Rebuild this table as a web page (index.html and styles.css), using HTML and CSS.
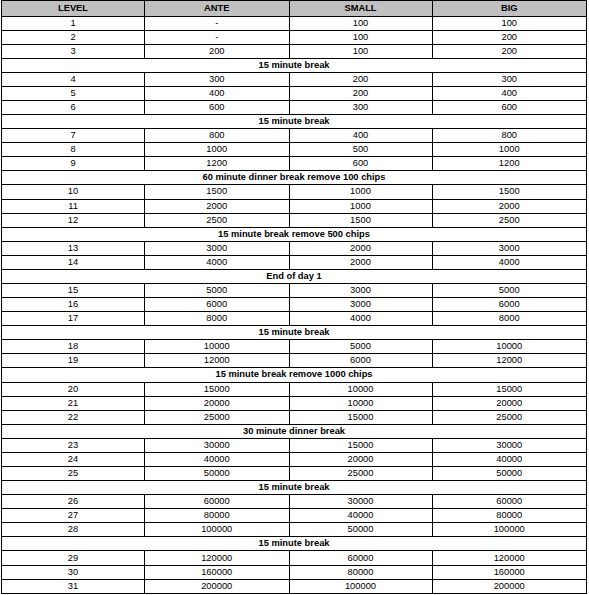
FILE: index.html
```html
<!DOCTYPE html>
<html>
<head>
<meta charset="utf-8">
<link rel="stylesheet" href="styles.css">
</head>
<body>
<table class="blinds">
<colgroup><col class="c1"><col class="c2"><col class="c3"><col class="c4"></colgroup>
<thead>
<tr class="head"><th>LEVEL</th><th>ANTE</th><th>SMALL</th><th>BIG</th></tr>
</thead>
<tbody>
<tr><td>1</td><td>-</td><td>100</td><td>100</td></tr>
<tr><td>2</td><td>-</td><td>100</td><td>200</td></tr>
<tr><td>3</td><td>200</td><td>100</td><td>200</td></tr>
<tr class="brk"><td colspan="4">15 minute break</td></tr>
<tr><td>4</td><td>300</td><td>200</td><td>300</td></tr>
<tr><td>5</td><td>400</td><td>200</td><td>400</td></tr>
<tr><td>6</td><td>600</td><td>300</td><td>600</td></tr>
<tr class="brk"><td colspan="4">15 minute break</td></tr>
<tr><td>7</td><td>800</td><td>400</td><td>800</td></tr>
<tr><td>8</td><td>1000</td><td>500</td><td>1000</td></tr>
<tr><td>9</td><td>1200</td><td>600</td><td>1200</td></tr>
<tr class="brk"><td colspan="4">60 minute dinner break remove 100 chips</td></tr>
<tr><td>10</td><td>1500</td><td>1000</td><td>1500</td></tr>
<tr><td>11</td><td>2000</td><td>1000</td><td>2000</td></tr>
<tr><td>12</td><td>2500</td><td>1500</td><td>2500</td></tr>
<tr class="brk"><td colspan="4">15 minute break remove 500 chips</td></tr>
<tr><td>13</td><td>3000</td><td>2000</td><td>3000</td></tr>
<tr><td>14</td><td>4000</td><td>2000</td><td>4000</td></tr>
<tr class="brk"><td colspan="4">End of day 1</td></tr>
<tr><td>15</td><td>5000</td><td>3000</td><td>5000</td></tr>
<tr><td>16</td><td>6000</td><td>3000</td><td>6000</td></tr>
<tr><td>17</td><td>8000</td><td>4000</td><td>8000</td></tr>
<tr class="brk"><td colspan="4">15 minute break</td></tr>
<tr><td>18</td><td>10000</td><td>5000</td><td>10000</td></tr>
<tr><td>19</td><td>12000</td><td>6000</td><td>12000</td></tr>
<tr class="brk"><td colspan="4">15 minute break remove 1000 chips</td></tr>
<tr><td>20</td><td>15000</td><td>10000</td><td>15000</td></tr>
<tr><td>21</td><td>20000</td><td>10000</td><td>20000</td></tr>
<tr><td>22</td><td>25000</td><td>15000</td><td>25000</td></tr>
<tr class="brk"><td colspan="4">30 minute dinner break</td></tr>
<tr><td>23</td><td>30000</td><td>15000</td><td>30000</td></tr>
<tr><td>24</td><td>40000</td><td>20000</td><td>40000</td></tr>
<tr><td>25</td><td>50000</td><td>25000</td><td>50000</td></tr>
<tr class="brk"><td colspan="4">15 minute break</td></tr>
<tr><td>26</td><td>60000</td><td>30000</td><td>60000</td></tr>
<tr><td>27</td><td>80000</td><td>40000</td><td>80000</td></tr>
<tr><td>28</td><td>100000</td><td>50000</td><td>100000</td></tr>
<tr class="brk"><td colspan="4">15 minute break</td></tr>
<tr><td>29</td><td>120000</td><td>60000</td><td>120000</td></tr>
<tr><td>30</td><td>160000</td><td>80000</td><td>160000</td></tr>
<tr><td>31</td><td>200000</td><td>100000</td><td>200000</td></tr>
</tbody>
</table>
</body>
</html>
```
FILE: styles.css
```css
html, body {
  margin: 0;
  padding: 0;
  background: #ffffff;
}
body {
  font-family: "Liberation Sans", Arial, sans-serif;
  font-size: 9.33px;
  color: #000;
}
.blinds {
  border-collapse: collapse;
  table-layout: fixed;
  width: 585px;
  margin: 0 0 0 1px;
}
.c1 { width: 143px; }
.c2 { width: 144.5px; }
.c3 { width: 143px; }
.c4 { width: 154.5px; }
.blinds th,
.blinds td {
  border: 1px solid #000;
  padding: 0;
  text-align: center;
  vertical-align: middle;
  line-height: 11px;
}
.blinds tr {
  height: 14.08px;
}
.blinds .head {
  height: 15.5px;
}
.blinds th {
  background: #c0c0c0;
  font-weight: bold;
}
.brk td {
  font-weight: bold;
}
```
